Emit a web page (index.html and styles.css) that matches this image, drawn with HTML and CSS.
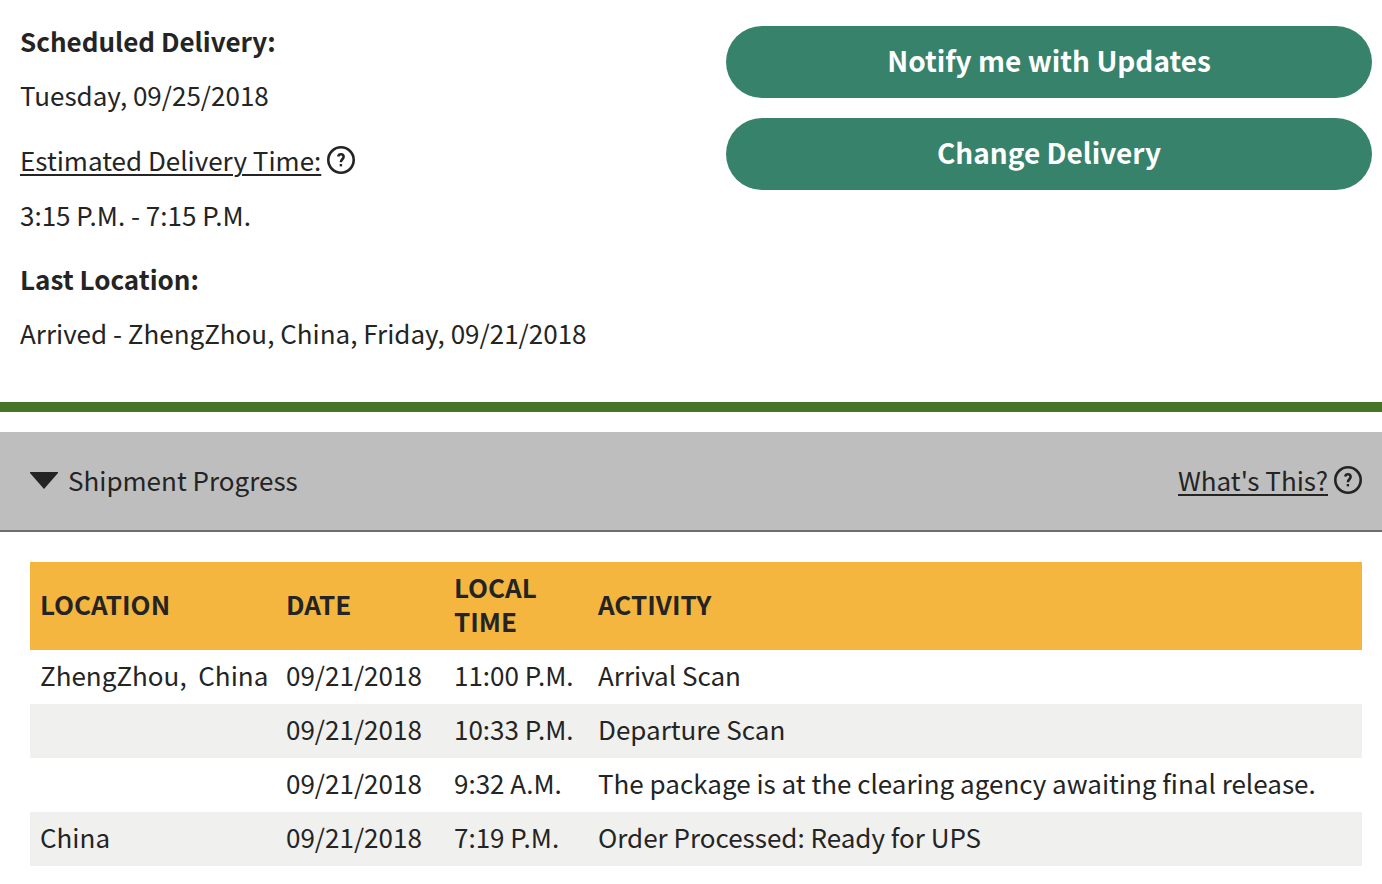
FILE: index.html
```
<!DOCTYPE html>
<html lang="en">
<head>
    <meta charset="UTF-8">
    <meta name="viewport" content="width=device-width, initial-scale=1">
    <title>Tracking Detail</title>
    <link rel="stylesheet" href="styles.css">
</head>
<body>

    <section class="summary">
        <dl class="details">
            <dt>Scheduled Delivery:</dt>
            <dd>Tuesday, 09/25/2018</dd>
            <dt>
                <a href="#" class="help">
                    <span class="help-text">Estimated Delivery Time:</span>
                    <svg class="help-icon" viewBox="0 0 28 28" aria-hidden="true">
                        <circle cx="14" cy="14" r="12.7"/>
                        <path d="M11.200 10.500c.3-1.500 1.300-2.300 2.700-2.300 1.700 0 2.700 1 2.700 2.500 0 2.500-2.700 2.600-2.700 5.500"/>
                        <rect x="12.700" y="18" width="2.400" height="2.400"/>
                    </svg>
                </a>
            </dt>
            <dd>3:15 P.M. - 7:15 P.M.</dd>
            <dt>Last Location:</dt>
            <dd>Arrived - ZhengZhou, China, Friday, 09/21/2018</dd>
        </dl>

        <div class="actions">
            <button type="button" class="btn">Notify me with Updates</button>
            <button type="button" class="btn">Change Delivery</button>
        </div>
    </section>

    <!-- Shipment Progress -->
    <section class="progress">
        <div class="progress-header">
            <button type="button" class="toggle" aria-expanded="true" aria-controls="progress-table">
                <svg class="arrow" viewBox="0 0 28 17" aria-hidden="true">
                    <path d="M0 0h28v1L14 17 0 1z"/>
                </svg>
                Shipment Progress
            </button>
            <a href="#" class="help">
                <span class="help-text">What's This?</span>
                <svg class="help-icon" viewBox="0 0 28 28" aria-hidden="true">
                    <circle cx="14" cy="14" r="12.7"/>
                    <path d="M11.200 10.500c.3-1.500 1.300-2.300 2.700-2.300 1.700 0 2.700 1 2.700 2.500 0 2.500-2.700 2.600-2.700 5.500"/>
                    <rect x="12.700" y="18" width="2.400" height="2.400"/>
                </svg>
            </a>
        </div>

        <div class="table-wrap" id="progress-table">
            <table>
                <thead>
                    <tr>
                        <th scope="col" class="col-location">Location</th>
                        <th scope="col" class="col-date">Date</th>
                        <th scope="col" class="col-time">Local<br>Time</th>
                        <th scope="col">Activity</th>
                    </tr>
                </thead>
                <tbody>
                    <tr>
                        <td>ZhengZhou,&nbsp; China</td>
                        <td>09/21/2018</td>
                        <td>11:00 P.M.</td>
                        <td>Arrival Scan</td>
                    </tr>
                    <tr>
                        <td></td>
                        <td>09/21/2018</td>
                        <td>10:33 P.M.</td>
                        <td>Departure Scan</td>
                    </tr>
                    <tr>
                        <td></td>
                        <td>09/21/2018</td>
                        <td>9:32 A.M.</td>
                        <td>The package is at the clearing agency awaiting final release.</td>
                    </tr>
                    <tr>
                        <td>China</td>
                        <td>09/21/2018</td>
                        <td>7:19 P.M.</td>
                        <td>Order Processed: Ready for UPS</td>
                    </tr>
                </tbody>
            </table>
        </div>
    </section>

</body>
</html>
```
FILE: styles.css
```
* {
    box-sizing: border-box;
}

body {
    margin: 0;
    font-family: "Noto Sans CJK SC", "Noto Sans", sans-serif;
    font-size: 26px;
    line-height: 34px;
    color: #242424;
    background: #fff;
}

/* Delivery summary */
.summary {
    display: grid;
    grid-template-columns: 1fr 1fr;
    gap: 60px;
    padding: 24px 10px 52px 20px;
    border-bottom: 10px solid #467529;
}

.details {
    margin: 0;
}

.details dt {
    margin-bottom: 20px;
    font-weight: bold;
}

.details dd {
    margin: 0 0 30px;
    white-space: nowrap;
}

.details dd:last-child {
    margin-bottom: 0;
}

.actions {
    display: flex;
    flex-direction: column;
    gap: 20px;
    padding-top: 2px;
}

.btn {
    height: 72px;
    padding: 0 20px 4px;
    border: none;
    border-radius: 36px;
    background: #37826b;
    color: #fff;
    font: inherit;
    font-size: 28px;
    font-weight: bold;
    cursor: pointer;
}

/* Help links */
.help {
    display: inline-flex;
    align-items: center;
    gap: 6px;
    height: 36px;
    color: inherit;
    font-weight: normal;
    text-decoration: none;
    vertical-align: top;
}

.help-text {
    text-decoration: underline;
    text-decoration-thickness: 2px;
    text-underline-offset: 3px;
}

.help-icon {
    width: 28px;
    height: 28px;
    fill: none;
    stroke: #242424;
    stroke-width: 2.6;
}

.help-icon rect {
    fill: #242424;
    stroke: none;
}

/* Shipment progress */
.progress {
    margin-top: 20px;
}

.progress-header {
    display: flex;
    justify-content: space-between;
    align-items: center;
    padding: 30px 20px 32px 30px;
    background: #bebebe;
    border-bottom: 2px solid #6d6e70;
}

.toggle {
    display: flex;
    align-items: center;
    gap: 10px;
    padding: 0;
    border: none;
    background: none;
    color: inherit;
    font: inherit;
    cursor: pointer;
}

.arrow {
    width: 28px;
    height: 17px;
    fill: #242424;
}

.table-wrap {
    padding: 30px 20px 18px 30px;
}

table {
    width: 100%;
    border-collapse: collapse;
    table-layout: fixed;
}

th, td {
    height: 54px;
    padding: 8px 10px 12px;
    text-align: left;
}

th {
    background: #f5b640;
    text-transform: uppercase;
}

.col-location {
    width: 246px;
}

.col-date {
    width: 168px;
}

.col-time {
    width: 144px;
}

td {
    white-space: nowrap;
}

tbody tr:nth-child(even) {
    background: #f0f0ee;
}
```
